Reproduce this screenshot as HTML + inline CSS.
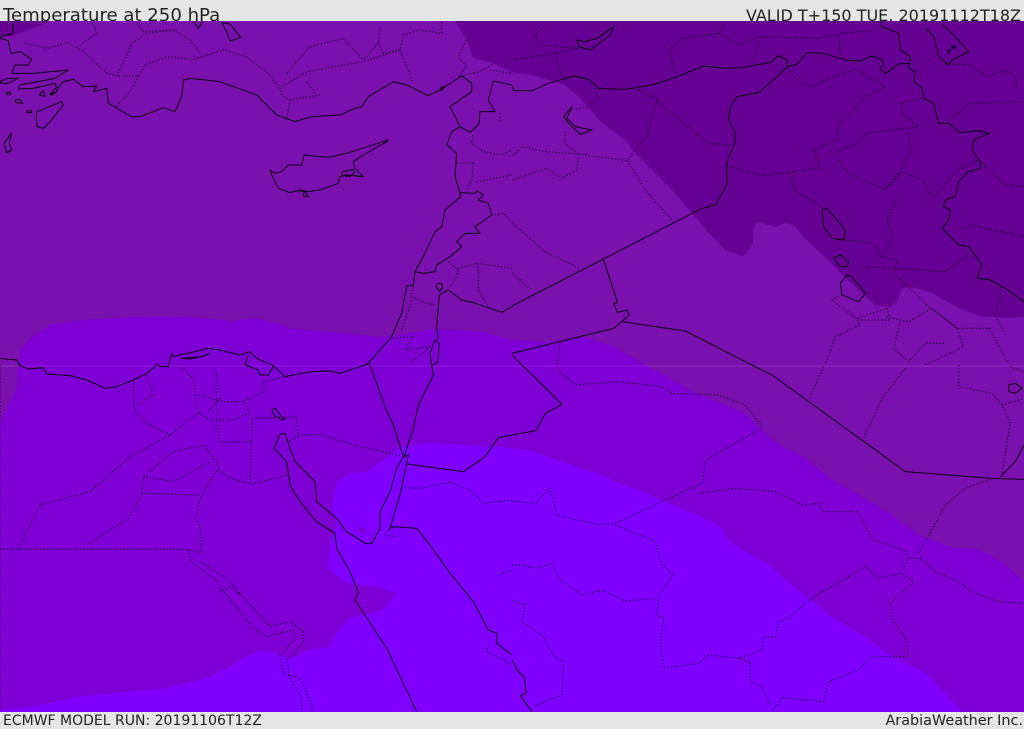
<!DOCTYPE html>
<html><head><meta charset="utf-8"><style>
html,body{margin:0;padding:0;background:#e5e5e5}
body{width:1024px;height:729px;position:relative;overflow:hidden;font-family:"DejaVu Sans",sans-serif;color:#222}
.t{position:absolute;white-space:nowrap;line-height:1}
svg{position:absolute;left:0;top:21px}
polyline,path{fill:none;stroke:#000;stroke-linejoin:round}
.c polyline{stroke-width:3;stroke-opacity:.9}
.d polyline{stroke-width:3.3;stroke-dasharray:3.3 6.7;stroke-opacity:.85}
</style></head><body>
<div class="t" style="left:3px;top:7px;font-size:18.1px">Temperature at 250 hPa</div>
<div class="t" style="right:3px;top:8px;font-size:16px">VALID T+150 TUE, 20191112T18Z</div>
<div class="t" style="left:3px;top:714px;font-size:14px">ECMWF MODEL RUN: 20191106T12Z</div>
<div class="t" style="right:1px;top:714px;font-size:14.4px">ArabiaWeather Inc.</div>
<svg width="1024" height="691" viewBox="0 21 1024 691">
<rect x="0" y="21" width="1024" height="691" fill="#7a10ae"/>
<polygon fill="#660095" points="455,21 467,40 473,58 493,63 512,72 532,75 565,85 579,97 599,120 625,140 635,153 655,173 675,193 692,213 709,233 725,250 742,256 747,253 753,243 753,230 757,222 765,224 775,227 785,223 794,225 805,238 825,257 845,277 862,293 875,305 890,307 897,302 902,288 912,287 932,293 959,308 979,316 1012,318 1024,317 1024,21"/>
<polygon fill="#660095" points="0,21 52,21 33,28 13,36 0,37"/>
<polygon fill="#7e00d5" points="18,365 20,350 30,338 50,325 83,320 133,317 187,317 233,321 257,318 273,322 293,329 333,332 377,337 400,335 433,329 483,332 512,340 545,342 585,337 615,347 645,365 669,377 689,390 719,402 742,412 755,423 775,442 805,458 829,477 862,497 889,513 919,535 949,547 979,550 1002,562 1024,581 1024,712 0,712 0,423 7,408 17,388"/>
<polygon fill="#7f00ff" points="0,710 33,707 77,697 117,693 167,688 207,678 233,665 257,651 273,652 290,659 310,650 328,647 340,628 350,618 383,610 397,593 377,587 347,583 333,573 327,568 330,552 330,542 337,525 332,505 337,482 350,473 367,472 383,460 400,447 427,443 467,445 512,448 532,451 592,472 662,500 712,522 722,528 729,542 769,565 795,588 829,615 865,637 889,655 925,673 962,712 0,712"/>
<ellipse cx="362" cy="530" rx="3" ry="4.5" fill="#7e00d5" transform="rotate(-25 362 530)"/>
<rect x="0" y="365.5" width="1024" height="1" fill="#fff" opacity=".13"/>

<!-- top-left quadrant -->
<g transform="scale(.33333)">
<g class="c">
<polyline points="0,115 25,122 33,160 62,155 95,178 85,195 45,195 35,220 100,220 205,210 165,235 60,255 55,267 100,265 165,250 170,262 150,282 168,278 175,262 190,245 220,238 250,260 290,258 280,275 320,265 325,310 360,330 395,350 420,350 490,323 525,335 545,290 550,240 570,235 660,245 770,285 830,345 885,365 935,350 1020,345 1065,325 1085,320 1105,290 1180,245 1220,255 1285,287 1320,270 1385,228 1415,250 1415,275 1350,320 1380,380 1355,395 1340,435 1370,460 1365,530 1380,578 1382,590 1335,630 1325,680 1305,695 1270,770 1245,815 1240,855 1220,858 1205,940 1175,1010 1100,1095"/>
<polyline points="40,63 38,100 0,112"/>
<polyline points="0,245 22,235 55,235 25,250 5,250 0,245"/>
<polyline points="118,285 130,272 135,290 118,285"/>
<polyline points="20,278 30,276 32,284 20,284 20,278"/>
<polyline points="45,300 60,298 68,310 48,308 45,300"/>
<polyline points="80,333 95,332 95,338 80,338 80,333"/>
<polyline points="150,280 162,278 160,284 150,284"/>
<polyline points="110,335 185,305 190,315 150,365 130,385 112,380 108,350 110,335"/>
<polyline points="35,398 12,430 20,458 35,450 28,430 35,398"/>
<polyline points="580,63 595,85 608,63"/>
<polyline points="665,68 690,72 722,112 690,123 680,95 665,68"/>
<polyline points="1320,265 1335,258 1325,272 1320,265"/>
<polyline points="1380,380 1410,397 1437,372 1440,335 1485,335 1465,300 1480,243 1536,255"/>
<polyline points="810,510 825,520 845,515 865,495 905,495 912,465 985,472 1040,460 1165,420 1160,425 1090,465 1060,485 1065,505 1090,530 1040,525 1020,530 1015,550 960,570 925,575 900,570 870,578 835,565 815,525 810,510"/>
<polyline points="1025,516 1060,508 1062,518 1050,530 1028,526 1025,516"/>
<polyline points="895,572 912,574 926,590 912,590 910,578"/>
<polyline points="1245,815 1270,820 1305,815 1310,795 1350,770 1385,740 1370,725 1395,700 1440,700 1425,680 1475,645 1465,610 1435,600 1450,585 1430,572 1425,580 1380,578"/>
<polyline points="1536,920 1505,937 1420,908 1385,900 1345,870 1318,885 1310,980 1315,1020"/>
<polyline points="1305,1020 1290,1060 1295,1095 1312,1090 1318,1030 1305,1020"/>
<polyline points="1312,850 1308,860 1320,875 1328,860 1325,850 1312,850"/>
<polyline points="0,1075 50,1080 60,1095"/>
</g>
<g class="d">
<polyline points="75,130 140,145 200,128 245,150 320,220 350,228 415,228 435,195 500,170 580,178 670,150 740,170 810,225 840,265 845,285 870,300 960,285"/>
<polyline points="350,228 370,190 395,130 440,100 520,90 570,120 600,160"/>
<polyline points="410,70 430,95 520,90"/>
<polyline points="280,70 290,100 240,135"/>
<polyline points="415,228 395,270 350,320"/>
<polyline points="840,265 920,215 1090,185 1200,150 1240,250"/>
<polyline points="860,220 930,140 1030,115 1090,180 1135,130 1140,75"/>
<polyline points="1135,130 1150,160 1200,150 1210,105 1260,90 1325,100 1325,65"/>
<polyline points="870,300 860,355"/>
<polyline points="920,245 950,285"/>
<polyline points="1400,120 1375,170 1400,200 1375,230 1440,215 1480,190"/>
<polyline points="1470,210 1536,220"/>
<polyline points="1420,405 1415,430 1450,455 1500,465 1536,450"/>
<polyline points="1370,490 1420,488 1415,540 1400,570"/>
<polyline points="1430,545 1536,525"/>
<polyline points="1475,645 1510,640 1536,665"/>
<polyline points="1500,340 1500,370"/>
<polyline points="1345,785 1375,810 1370,830 1350,860"/>
<polyline points="1375,805 1430,790 1536,805"/>
<polyline points="1435,790 1435,870 1465,920"/>
<polyline points="1240,860 1235,890 1280,910 1310,915"/>
<polyline points="1205,990 1235,900"/>
<polyline points="1180,1015 1240,1010 1215,1050 1290,1040 1230,1090"/>
</g>
</g>

<!-- top-right quadrant -->
<g transform="translate(512,0) scale(.33333)">
<g class="c">
<polyline points="0,258 5,272 60,272 110,250 185,228 230,238 260,265 340,268 420,255 490,232 575,198 640,205 690,203 775,187 800,167 825,180 825,200 855,193 885,158 935,160 1000,180 1045,183 1080,168 1110,178 1115,195 1103,205 1120,220 1160,192 1195,190"/>
<polyline points="825,203 740,278 675,290 655,320 650,360 670,400 668,430 650,470 643,500 645,555 610,615 570,625 0,918"/>
<polyline points="0,1060 305,985 352,945 345,930 315,937 305,910 317,908 273,775"/>
<polyline points="0,1065 30,1095"/>
<polyline points="330,965 520,993 720,1095"/>
<polyline points="1105,65 1110,80 1160,100 1165,150 1195,170 1190,205 1210,215 1205,245 1230,265 1235,295 1265,310 1280,370 1310,370 1345,398 1400,392 1432,400 1385,420 1380,450 1405,485 1405,505 1370,515 1340,545 1330,590 1300,600 1295,620 1315,630 1310,660 1290,685 1340,735 1370,740 1410,795 1395,835 1430,838 1480,865 1536,905"/>
<polyline points="155,350 180,320 165,355 190,380 240,390 205,403 175,375 155,350"/>
<polyline points="195,120 220,125 255,115 305,80 295,105 235,150 200,140 195,120"/>
<polyline points="1290,75 1320,100 1370,155 1320,180 1310,195 1280,170 1265,110 1240,85"/>
<polyline points="930,630 945,625 1000,690 995,720 960,715 935,680 930,630"/>
<polyline points="965,775 985,765 1010,785 1005,800 985,800 965,775"/>
<polyline points="1005,825 1020,830 1060,880 1040,905 990,885 985,850 1005,825"/>
<polyline points="1305,150 1315,150 1310,162 1305,150"/>
<polyline points="1318,138 1330,140 1325,146 1318,138"/>
</g>
<g class="d">
<polyline points="65,110 100,75"/>
<polyline points="65,110 90,135 195,145 130,160 0,180"/>
<polyline points="130,160 140,210 160,240"/>
<polyline points="470,150 510,115 620,100 640,70"/>
<polyline points="470,150 490,220"/>
<polyline points="620,100 680,135 740,110 920,115 990,100 1090,90"/>
<polyline points="740,110 725,180"/>
<polyline points="980,105 985,170"/>
<polyline points="435,300 405,405 365,455 345,482 200,462 100,455 30,440 0,470"/>
<polyline points="435,305 540,390 590,430 660,435"/>
<polyline points="380,270 435,300"/>
<polyline points="250,265 255,295 230,320 185,328"/>
<polyline points="200,462 195,510 150,535 105,505 0,540"/>
<polyline points="345,482 400,570 485,665"/>
<polyline points="160,395 160,430 195,460"/>
<polyline points="0,670 100,755 200,805"/>
<polyline points="0,820 60,870"/>
<polyline points="645,497 750,527 850,515 925,505"/>
<polyline points="845,515 845,570 915,610 935,630"/>
<polyline points="905,450 975,420 980,375 1060,290 1120,260 1030,208 970,228 895,262 850,235 830,205"/>
<polyline points="905,450 925,505"/>
<polyline points="965,458 1040,430 1060,400 1220,380 1175,345 1165,310 1230,295"/>
<polyline points="980,480 1010,520 1120,570 1165,510 1195,450 1190,400"/>
<polyline points="1120,570 1170,515 1230,540 1260,595 1340,510"/>
<polyline points="1155,590 1125,660 1140,700 1135,730 1105,770 1155,780 1150,815"/>
<polyline points="1000,720 1085,730 1105,765"/>
<polyline points="1050,800 1150,805 1300,815 1370,765"/>
<polyline points="1155,830 1190,860 1250,920 1335,985 1355,1040 1240,1095"/>
<polyline points="1125,925 1135,960 1040,960 960,900 985,885"/>
<polyline points="1125,925 1035,955 1045,975 970,1010 940,1095"/>
<polyline points="1125,950 1165,960 1190,965 1260,925 1335,985 1440,985"/>
<polyline points="1165,965 1145,1045 1190,1085 1240,1030 1300,1030"/>
<polyline points="1430,985 1490,1090"/>
<polyline points="1470,860 1450,950 1480,1000"/>
<polyline points="1350,690 1380,675 1536,710"/>
<polyline points="1315,360 1370,310 1536,305"/>
<polyline points="1340,510 1400,480 1480,555 1536,560"/>
<polyline points="1300,190 1370,195 1430,230 1475,210 1510,230 1515,270"/>
<polyline points="145,1030 135,1095"/>
</g>
</g>

<!-- bottom-left quadrant -->
<g transform="translate(0,365) scale(.33333)">
<g class="c">
<polyline points="55,0 85,12 130,8 140,27 210,32 260,45 315,70 350,65 400,45 440,25 470,0"/>
<polyline points="1110,0 1155,125 1180,180 1210,275"/>
<polyline points="1295,0 1300,30 1255,120 1240,190 1212,275 1225,270 1200,390 1170,490 1165,497"/>
<polyline points="1210,275 1190,310 1170,380 1140,440 1140,490 1115,535 1095,535 1040,500 1010,460 950,410 945,350 885,290 870,250 855,205 840,208 822,250 860,290 870,360 900,410 950,470 1005,505 1010,550 1050,620 1075,680 1065,705 1160,850 1250,1040"/>
<polyline points="1170,490 1180,485 1250,490 1290,540 1350,625 1420,710 1465,795 1490,805 1490,835 1536,870"/>
<polyline points="1222,297 1390,320 1455,275 1495,218 1536,210"/>
<polyline points="815,135 825,130 845,155 855,160 850,165 825,155 815,135"/>
</g>
<g class="d">
<polyline points="400,45 402,130 440,175 510,210"/>
<polyline points="440,30 460,90 410,120"/>
<polyline points="510,210 595,143 585,90 585,45 540,5"/>
<polyline points="595,90 670,110 730,110 790,80 790,50 860,35"/>
<polyline points="650,20 650,170 660,232 755,230 755,160 890,155 895,215 865,230"/>
<polyline points="750,355 755,230"/>
<polyline points="595,143 630,165 700,165 745,145 735,110"/>
<polyline points="660,100 625,140"/>
<polyline points="895,210 960,208 1060,240 1200,272"/>
<polyline points="0,553 560,553 605,563 600,480 585,460 605,390 655,310 650,290 610,240 520,260 430,335 425,390 385,460 260,540"/>
<polyline points="430,335 520,350 630,290"/>
<polyline points="55,550 120,420 270,380 390,275 510,210"/>
<polyline points="655,315 690,340 755,358 865,330"/>
<polyline points="425,385 600,390"/>
<polyline points="565,555 575,590 640,640 760,790 800,815 880,795 885,820 850,865"/>
<polyline points="600,590 680,640 810,785 870,770 910,800 910,830 870,880"/>
<polyline points="660,680 690,665 720,690"/>
<polyline points="840,870 850,925 900,940 920,980 940,1040"/>
<polyline points="860,880 870,940 905,1000 905,1040"/>
<polyline points="1205,368 1260,370 1350,352 1410,375 1450,415 1536,405"/>
<polyline points="1155,510 1190,515"/>
<polyline points="0,0 0,1040"/>
<polyline points="1465,840 1460,860 1530,895 1530,905"/>
<polyline points="1500,628 1536,615"/>
</g>
</g>

<!-- delta -->
<g transform="translate(130,335) scale(.33333)">
<g class="c">
<polyline points="80,85 90,95 115,95 125,55 130,65 195,50 235,40 270,45 330,60 360,50 380,70 430,92 465,125 545,110 600,108 630,115 720,85"/>
<polyline points="240,55 215,65 155,70 180,72 225,62 240,55"/>
<polyline points="345,90 355,60"/>
<polyline points="345,90 385,105 390,120 415,120 430,95"/>
</g>
</g>

<!-- bottom-right quadrant -->
<g transform="translate(512,365) scale(.33333)">
<g class="c">
<polyline points="0,210 72,197 100,145 150,118 30,0"/>
<polyline points="720,0 780,30 1180,320 1440,340 1536,343"/>
<polyline points="1465,335 1510,290 1536,240"/>
<polyline points="0,885 15,915 38,940 42,985 25,992 60,1040"/>
<polyline points="1490,60 1510,55 1530,70 1510,85 1490,80 1490,60"/>
</g>
<g class="d">
<polyline points="140,15 190,60 320,50 450,65 480,85 620,90 700,120 750,185"/>
<polyline points="740,195 580,285 570,355 460,405 310,475 260,480 135,450 115,370 70,415 0,408"/>
<polyline points="310,480 430,530 450,600 485,630 440,690 435,750 455,760 445,830 455,910 560,895 590,870 680,880 750,855 755,815 790,815 800,770 830,760 890,705 950,670 1060,605 1100,640 1170,625 1205,650 1135,715 1140,760 1180,820 1190,875 1080,875 1040,915 950,950 935,1010 810,998 780,1040"/>
<polyline points="680,880 715,890 715,950 750,965 775,1020"/>
<polyline points="560,385 670,370 790,380 870,420 920,415 930,440 1035,440 1085,525 1175,555 1190,580 1225,580 1270,620 1340,650 1380,680 1460,710 1536,715"/>
<polyline points="1190,575 1170,620"/>
<polyline points="1220,565 1300,420 1360,370 1440,340"/>
<polyline points="0,600 30,600 75,610 120,595 140,640 210,690 270,675 340,708 430,700"/>
<polyline points="0,705 40,720 30,770 90,810 130,880 155,890 150,990 60,1025"/>
<polyline points="935,5 890,105"/>
<polyline points="1180,10 1110,100 1055,220"/>
<polyline points="1340,0 1340,65 1440,85 1470,120 1495,170 1470,330"/>
<polyline points="1470,120 1536,100"/>
<polyline points="1495,5 1536,20"/>
</g>
</g>
</svg>
</body></html>
